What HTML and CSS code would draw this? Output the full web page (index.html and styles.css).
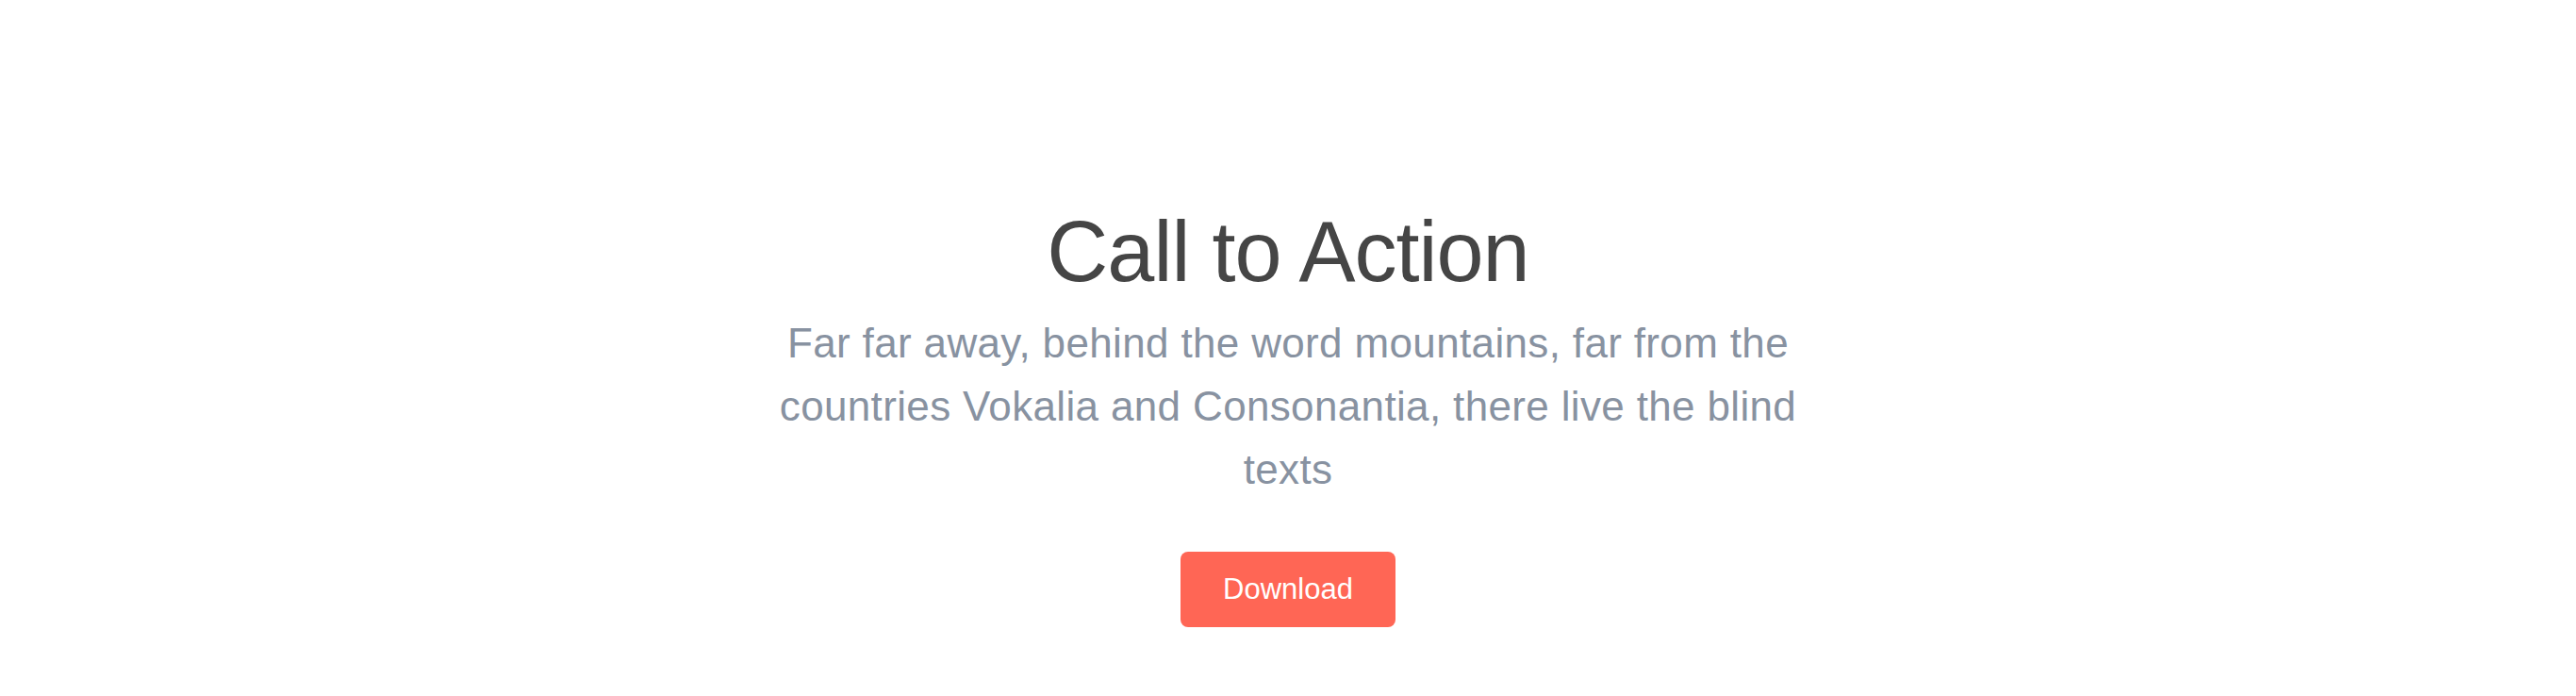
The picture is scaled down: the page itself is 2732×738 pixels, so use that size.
FILE: index.html
```html
<!DOCTYPE html>
<html lang="en">
<head>
<meta charset="utf-8">
<title>Call to Action</title>
<link rel="stylesheet" href="styles.css">
</head>
<body>
<section class="cta">
  <h2 class="cta-title">Call to Action</h2>
  <p class="cta-text">Far far away, behind the word mountains, far from the countries Vokalia and Consonantia, there live the blind texts</p>
  <a class="cta-button" href="#">Download</a>
</section>
</body>
</html>
```
FILE: styles.css
```css
html, body {
  margin: 0;
  padding: 0;
  background: #ffffff;
}
body {
  font-family: "Liberation Sans", Arial, Helvetica, sans-serif;
}
.cta {
  display: flex;
  flex-direction: column;
  align-items: center;
  padding-top: 213px;
  text-align: center;
}
.cta-title {
  margin: 0 0 9px;
  font-size: 90px;
  line-height: 108px;
  font-weight: 400;
  letter-spacing: -1px;
  color: #454545;
}
.cta-text {
  margin: 0;
  max-width: 1110px;
  font-size: 44px;
  line-height: 67px;
  letter-spacing: 0.35px;
  color: #8892a1;
}
.cta-button {
  display: inline-block;
  margin-top: 54px;
  padding: 0 45px;
  height: 80px;
  line-height: 80px;
  font-size: 31px;
  color: #ffffff;
  background: #ff6655;
  border-radius: 8px;
  text-decoration: none;
}
```
